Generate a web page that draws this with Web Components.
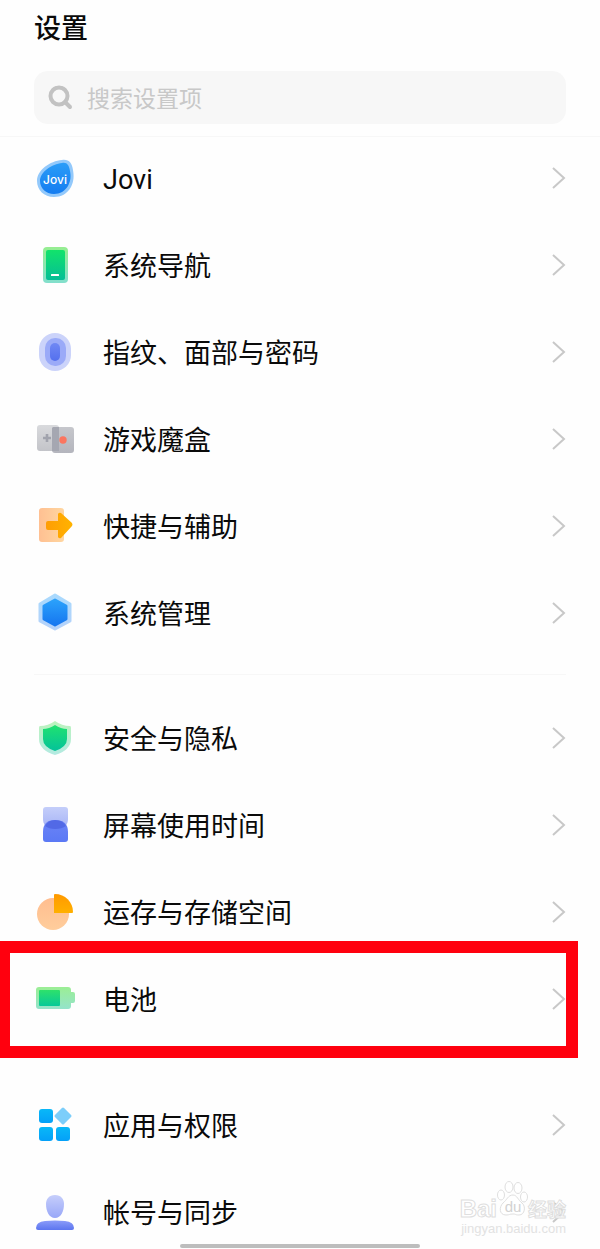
<!DOCTYPE html>
<html lang="zh-CN">
<head>
  <meta charset="UTF-8">
  <meta name="viewport" content="width=device-width, initial-scale=1.0">
  <title>设置</title>
  <style>
    body {
      margin: 0;
      background: #fefefe;
      color: #0a0a0a;
      font-family: Roboto, "Noto Sans CJK SC", sans-serif;
    }
  </style>
</head>
<body>
  <settings-page>
    <settings-header slot="header" placeholder="搜索设置项">设置</settings-header>
    <settings-group>
      <settings-item icon="jovi">Jovi</settings-item>
      <settings-item icon="navigation">系统导航</settings-item>
      <settings-item icon="fingerprint">指纹、面部与密码</settings-item>
      <settings-item icon="game">游戏魔盒</settings-item>
      <settings-item icon="shortcut">快捷与辅助</settings-item>
      <settings-item icon="system">系统管理</settings-item>
    </settings-group>
    <settings-group divided>
      <settings-item icon="security">安全与隐私</settings-item>
      <settings-item icon="screentime">屏幕使用时间</settings-item>
      <settings-item icon="storage">运存与存储空间</settings-item>
      <settings-item icon="battery" marked>电池</settings-item>
    </settings-group>
    <settings-group>
      <settings-item icon="apps">应用与权限</settings-item>
      <settings-item icon="account">帐号与同步</settings-item>
    </settings-group>
    <baidu-watermark slot="overlay"></baidu-watermark>
    <home-indicator slot="overlay"></home-indicator>
  </settings-page>

  <script>
    const gradient = (id, from, to) => `
      <linearGradient id="${id}" x1="0" y1="0" x2="0" y2="1">
        <stop offset="0" stop-color="${from}"/><stop offset="1" stop-color="${to}"/>
      </linearGradient>`;

    // every icon is drawn on a 42x42 grid
    const icons = {
      jovi: `
        <defs>${gradient('a', '#2a9df8', '#147cf0')}</defs>
        <path d="M28 3C35 2 38 6 39 13C40 19 40 24 37 30C33 37 27 40 20 40C10 40 3 33 3 24C3 13 16 4 28 3Z" fill="#93c9fb"/>
        <path d="M28 6C33 5 35 8 36 14C37 19 37 23 34 29C31 34 26 37 20 37C12 37 6 31 6 24C6 15 18 7 28 6Z" fill="url(#a)"/>
        <text x="21" y="27" text-anchor="middle" font-family="Inter, sans-serif" font-size="12" font-weight="500" fill="#fff">Jovi</text>`,
      navigation: `
        <defs>${gradient('a', '#96ee91', '#83dfcd')}${gradient('b', '#12e36b', '#04be96')}</defs>
        <rect x="9" y="3" width="25" height="36" rx="4" fill="url(#a)"/>
        <rect x="12" y="6" width="19" height="30" rx="2" fill="url(#b)"/>
        <rect x="17" y="30" width="8" height="2" rx=".5" fill="#fff"/>`,
      fingerprint: `
        <defs>${gradient('a', '#7088f4', '#5470ee')}</defs>
        <rect x="5" y="2" width="32" height="38" rx="16" fill="#cbd3fa"/>
        <rect x="11" y="7" width="21" height="28" rx="10" fill="#9aaaf8"/>
        <rect x="16" y="12" width="10" height="18" rx="5" fill="url(#a)"/>`,
      game: `
        <defs>${gradient('a', '#d9dadd', '#c3c4c9')}${gradient('b', '#c6c7cc', '#b4b5bd')}</defs>
        <rect x="3" y="7" width="22" height="26" rx="3" fill="url(#a)"/>
        <rect x="18" y="9" width="22" height="26" rx="3" fill="url(#b)"/>
        <path d="M18 10L19 9H25V33H18Z" fill="#a5a7b1"/>
        <path d="M13 16V24M9 20H17" stroke="#a1a3ad" stroke-width="2.6" fill="none"/>
        <circle cx="29" cy="22" r="3.7" fill="#fb755f"/>`,
      shortcut: `
        <defs>
          <linearGradient id="a"><stop stop-color="#ffc092"/><stop offset="1" stop-color="#ffd6a0"/></linearGradient>
          <linearGradient id="b"><stop stop-color="#ff9d05"/><stop offset="1" stop-color="#ffb300"/></linearGradient>
        </defs>
        <rect x="5" y="3" width="25" height="34" rx="3" fill="url(#a)"/>
        <path d="M14 16H24V9Q25 7 27 8L38 18Q39 20 38 21L27 33Q25 34 24 32V25H14Q12 25 12 23V18Q12 16 14 16Z" fill="url(#b)"/>`,
      system: `
        <defs>${gradient('a', '#2ba1fb', '#1677f0')}${gradient('b', '#a9d9fd', '#b5d2fa')}</defs>
        <path d="M21 3L36 12V29L21 37L6 29V12Z" fill="url(#b)" stroke="url(#b)" stroke-width="3" stroke-linejoin="round"/>
        <path d="M21 8L32 14V27L21 33L10 27V14Z" fill="url(#a)" stroke="url(#a)" stroke-width="3" stroke-linejoin="round"/>`,
      security: `
        <defs>${gradient('a', '#20e26f', '#04c29a')}${gradient('b', '#bcf3bc', '#b3eae2')}</defs>
        <path d="M21 4Q28 9 36 9Q37 9 37 11V22Q37 33 21 38Q5 33 5 22V11Q5 9 6 9Q14 9 21 4Z" fill="url(#b)"/>
        <path d="M21 8Q27 12 33 12V22Q33 30 21 34Q9 30 9 22V12Q15 12 21 8Z" fill="url(#a)"/>`,
      screentime: `
        <defs>${gradient('a', '#c4cefa', '#a5b2f6')}${gradient('b', '#6b83f6', '#5b79f5')}</defs>
        <path d="M12 3H31Q34 3 34 6V15Q34 25 21 25Q9 25 9 15V6Q9 3 12 3Z" fill="url(#a)"/>
        <path d="M9 28Q9 16 21 16Q34 16 34 28V35Q34 38 31 38H12Q9 38 9 35Z" fill="url(#b)"/>
        <path d="M11 22Q14 16 21 16Q29 16 32 22Q28 25 21 25Q15 25 11 22Z" fill="#5269e6"/>`,
      storage: `
        <defs>${gradient('a', '#ffbd8f', '#ffcd9c')}${gradient('b', '#ff9900', '#ffb000')}</defs>
        <circle cx="19" cy="23" r="16" fill="url(#a)"/>
        <path d="M20 4Q20 3 21 3C31 3 39 11 39 21Q39 22 38 22H20Z" fill="url(#b)"/>`,
      battery: `
        <defs>${gradient('a', '#9bee94', '#94e3cb')}${gradient('b', '#2ee16b', '#06c998')}</defs>
        <path d="M5 9H34Q37 9 37 12V14H39Q41 14 41 16V23Q41 25 39 25H37V28Q37 31 34 31H5Q2 31 2 28V12Q2 9 5 9Z" fill="url(#a)"/>
        <rect x="5" y="12" width="21" height="16" rx="1" fill="url(#b)"/>`,
      apps: `
        <defs>${gradient('a', '#09b8f8', '#04a0f8')}</defs>
        <rect x="5" y="5" width="14" height="14" rx="3" fill="url(#a)"/>
        <rect x="5" y="23" width="14" height="14" rx="3" fill="url(#a)"/>
        <rect x="22" y="23" width="14" height="14" rx="3" fill="url(#a)"/>
        <path d="M29 5L36 12L29 19L22 12Z" fill="#7ccefa" stroke="#7ccefa" stroke-width="3" stroke-linejoin="round"/>`,
      account: `
        <defs>${gradient('a', '#c6cefb', '#98a7f8')}${gradient('b', '#8b9cf9', '#5c75ef')}</defs>
        <path d="M21 4C27 4 30 8 30 13C30 20 27 27 21 27C15 27 12 20 12 13C12 8 15 4 21 4Z" fill="url(#a)"/>
        <path d="M2 37Q2 31 11 30Q21 29 31 30Q40 31 40 37Q40 39 38 39H4Q2 39 2 37Z" fill="url(#b)"/>`
    };

    class SettingsPage extends HTMLElement {
      connectedCallback() {
        this.attachShadow({ mode: 'open' });
        this.shadowRoot.innerHTML = `
          <style>
            :host {
              display: block;
              position: relative;
              height: 100vh;
              overflow: hidden;
            }
            main {
              display: flex;
              flex-direction: column;
            }
          </style>
          <slot name="header"></slot>
          <main><slot></slot></main>
          <slot name="overlay"></slot>
        `;
      }
    }

    class SettingsHeader extends HTMLElement {
      connectedCallback() {
        this.attachShadow({ mode: 'open' });
        this.shadowRoot.innerHTML = `
          <style>
            :host {
              display: block;
              padding: 9px 34px 12px;
              border-bottom: 1px solid #f7f7f7;
            }
            h1 {
              margin: 0 0 22px;
              font-size: 27px;
              line-height: 40px;
              font-weight: 500;
            }
            .search {
              display: flex;
              align-items: center;
              gap: 14px;
              height: 53px;
              padding: 0 14px;
              border-radius: 14px;
              background: #f7f7f7;
            }
            label {
              display: flex;
            }
            input {
              flex: 1;
              min-width: 0;
              padding: 4px 0 0;
              border: 0;
              outline: 0;
              background: none;
              color: inherit;
              font: inherit;
              font-size: 23px;
              line-height: 36px;
            }
            input::placeholder {
              color: #c8c8c8;
              opacity: 1;
            }
          </style>
          <h1><slot></slot></h1>
          <div class="search">
            <label for="query" aria-label="${this.getAttribute('placeholder')}">
              <svg width="25" height="26" viewBox="0 0 25 26" fill="none" stroke="#c2c2c2" stroke-width="4" stroke-linecap="round">
                <circle cx="11" cy="11" r="8.5"/>
                <path d="M17 17L22 22"/>
              </svg>
            </label>
            <input id="query" type="text" placeholder="${this.getAttribute('placeholder')}">
          </div>
        `;
      }
    }

    class SettingsGroup extends HTMLElement {
      connectedCallback() {
        this.attachShadow({ mode: 'open' });
        this.shadowRoot.innerHTML = `
          <style>
            :host {
              display: flex;
              flex-direction: column;
              gap: 5px;
              padding-bottom: 20px;
            }
            :host(:not(:first-of-type)) {
              padding-top: 24px;
            }
            :host([divided]:not(:first-of-type)) {
              padding-top: 0;
            }
            :host([divided])::before {
              content: "";
              height: 1px;
              margin: 0 34px 17px;
              background: #f7f7f7;
            }
          </style>
          <slot></slot>
        `;
      }
    }

    class SettingsItem extends HTMLElement {
      connectedCallback() {
        this.attachShadow({ mode: 'open' });
        this.shadowRoot.innerHTML = `
          <style>
            :host {
              display: block;
              position: relative;
            }
            a {
              display: flex;
              align-items: center;
              gap: 27px;
              height: 82px;
              padding: 0 34px;
              color: inherit;
              font-size: 27px;
              line-height: 40px;
              text-decoration: none;
            }
            .label {
              flex: 1;
              padding-top: 3px;
            }
            svg {
              flex: none;
            }
            /* hand drawn frame over the row */
            :host([marked])::after {
              content: "";
              position: absolute;
              inset: -17px 22px -18px 0;
              border: 12px solid #ff000e;
              border-left-width: 10px;
              pointer-events: none;
            }
          </style>
          <a href="#${this.getAttribute('icon')}">
            <svg width="42" height="42" viewBox="0 0 42 42" aria-hidden="true">${icons[this.getAttribute('icon')]}</svg>
            <span class="label"><slot></slot></span>
            <svg width="14" height="22" viewBox="0 0 14 22" fill="none" stroke="#c8c8c8" stroke-width="2" aria-hidden="true">
              <path d="M1 1L12 11L1 21"/>
            </svg>
          </a>
        `;
      }
    }

    class BaiduWatermark extends HTMLElement {
      connectedCallback() {
        this.attachShadow({ mode: 'open' });
        this.shadowRoot.innerHTML = `
          <style>
            :host {
              position: absolute;
              right: 34px;
              bottom: 14px;
              color: #fff;
              pointer-events: none;
            }
            .brand {
              display: flex;
              align-items: baseline;
              justify-content: flex-end;
              font: bold 24px/24px "Liberation Sans", "Noto Sans CJK SC", sans-serif;
              -webkit-text-stroke: 1px #dfdfdf;
            }
            .brand svg {
              -webkit-text-stroke: 0;
            }
            .cn {
              font-size: 19px;
            }
            .url {
              font: 13px/12px "Liberation Sans", sans-serif;
              text-align: right;
              color: #e2e2e2;
            }
          </style>
          <div class="brand">
            <span>Bai</span>
            <svg width="31" height="36" viewBox="0 0 31 36" fill="#fff" stroke="#dfdfdf">
              <ellipse cx="4" cy="14" rx="3.5" ry="5"/>
              <ellipse cx="12" cy="6" rx="4" ry="5.5"/>
              <ellipse cx="21" cy="7" rx="4" ry="5.5"/>
              <ellipse cx="27" cy="16" rx="3.5" ry="5"/>
              <path d="M16 14C20 14 21 19 25 22C29 25 28 34 22 34C18 34 19 33 16 33C12 33 13 34 9 34C2 34 2 26 6 22C10 19 11 14 16 14Z"/>
              <text x="16" y="31" text-anchor="middle" font-size="15" font-weight="400" fill="#d2d2d2" stroke="none">du</text>
            </svg>
            <span class="cn">经验</span>
          </div>
          <div class="url">jingyan.baidu.com</div>
        `;
      }
    }

    class HomeIndicator extends HTMLElement {
      connectedCallback() {
        this.attachShadow({ mode: 'open' });
        this.shadowRoot.innerHTML = `
          <style>
            :host {
              position: absolute;
              left: 30%;
              right: 30%;
              bottom: 1px;
              height: 4px;
              border-radius: 2px;
              background: #bdbdbd;
            }
          </style>
        `;
      }
    }

    customElements.define('settings-page', SettingsPage);
    customElements.define('settings-header', SettingsHeader);
    customElements.define('settings-group', SettingsGroup);
    customElements.define('settings-item', SettingsItem);
    customElements.define('baidu-watermark', BaiduWatermark);
    customElements.define('home-indicator', HomeIndicator);
  </script>
</body>
</html>
